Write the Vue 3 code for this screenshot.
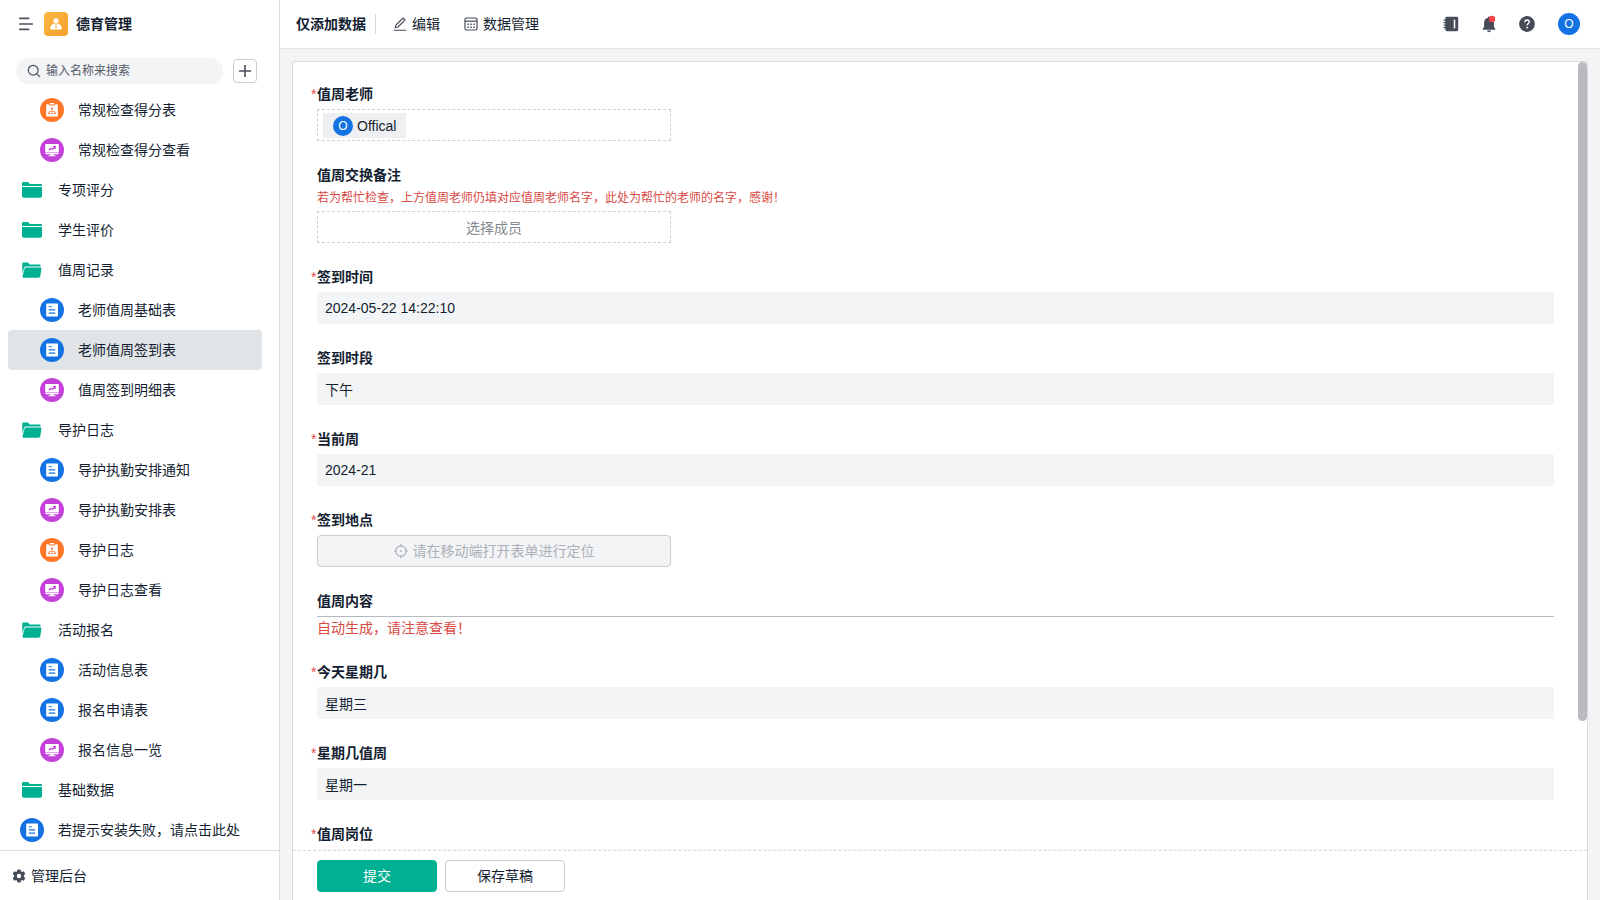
<template>
  <div class="layout">
    <aside class="sidebar">
      <div class="sidebar-header">
        <button class="icon-button" aria-label="菜单">
          <svg width="14" height="14" viewBox="0 0 14 14" fill="none" stroke="currentColor" stroke-width="1.6" stroke-linecap="round">
            <path d="M.8 1.4h8.8M.8 7h12.600M.8 12.400h8.800" />
          </svg>
        </button>
        <span class="app-logo">
          <svg width="24" height="24" viewBox="0 0 24 24" fill="#fff">
            <circle cx="12" cy="8.8" r="2.6" />
            <path fill-rule="evenodd" d="M9.9 11.6 12 13l2.1-1.4c2.2.7 3.7 2.6 3.7 5.2 0 .5-.3.8-.8.8H7c-.5 0-.8-.3-.8-.8 0-2.6 1.5-4.5 3.7-5.2zM11.600 14l-.4 1.800.8.8.8-.8-.4-1.800z" />
          </svg>
        </span>
        <strong class="app-name">德育管理</strong>
      </div>

      <div class="search-row">
        <label class="search-box">
          <svg width="14" height="14" viewBox="0 0 14 14" fill="none" stroke="#4a4f5a" stroke-width="1.2" stroke-linecap="round">
            <circle cx="6.200" cy="6.200" r="4.900" />
            <path d="m9.800 9.800 2.900 2.900" />
          </svg>
          <input type="text" placeholder="输入名称来搜索" aria-label="输入名称来搜索" />
        </label>
        <button class="add-button" aria-label="新建">
          <svg width="14" height="14" viewBox="0 0 14 14" fill="none" stroke="currentColor" stroke-width="1.6">
            <path d="M1 7h12M7 1v12" />
          </svg>
        </button>
      </div>

      <nav class="menu">
        <a
          v-for="item in menuItems"
          :key="item.id"
          href="#"
          class="menu-item"
          :class="{ child: item.child, active: item.id === current }"
          @click.prevent="select(item)"
        >
          <span class="menu-icon" :class="item.type">
            <svg v-if="item.type === 'folder'" width="24" height="24" viewBox="0 0 24 24" fill="#00b092">
              <path d="M2 8V5.500C2 4.600 2.600 4 3.500 4h4.300l2.300 2h10.400c.9 0 1.500.5 1.500 1.400V8z" />
              <path d="M2 8.900h20v9.200c0 1-.7 1.700-1.700 1.700H3.700c-1 0-1.700-.7-1.700-1.700z" />
            </svg>
            <svg v-else-if="item.type === 'folder-open'" width="24" height="24" viewBox="0 0 24 24" fill="#00b092">
              <path d="M2.300 15.500V6c0-.9.5-1.400 1.400-1.400h4.100l2 1.800h9.300c1 0 1.500.5 1.500 1.400v.7H6.200c-1.200 0-1.800.5-2.100 1.500z" />
              <path d="M6.400 9.400H20c1.100 0 1.600.6 1.400 1.600l-1.100 7.100c-.2 1-.8 1.600-1.800 1.600H3.800c-.9 0-1.400-.6-1.200-1.500L4.400 11c.3-1.100.9-1.600 2-1.600z" />
            </svg>
            <svg v-else-if="item.type === 'form'" width="24" height="24" viewBox="0 0 24 24">
              <rect x="6.200" y="5.400" width="11.800" height="13.200" rx="1" fill="#fff" />
              <path d="M8.800 8.700h3M8.800 11.900h6.400M8.800 15.100h6.400" fill="none" stroke="#1473e3" stroke-width="1.100" />
            </svg>
            <svg v-else-if="item.type === 'flow'" width="24" height="24" viewBox="0 0 24 24">
              <path d="M7.200 6.200h1.600v1.200h6.400V6.200h1.600c.6 0 1 .4 1 1v10.400c0 .6-.4 1-1 1H7.200c-.6 0-1-.4-1-1V7.200c0-.6.4-1 1-1z" fill="#fff" />
              <rect x="9.700" y="5" width="4.600" height="1.500" rx=".5" fill="#fff" />
              <path d="M12 11v3M9 15v-1.400h6V15" fill="none" stroke="#ff7629" stroke-width=".7" />
              <path d="M12 9.100l1.400 2.200h-2.800zM8.100 14.700h1.800v1.400H8.100zM11.100 14.700h1.800v1.400h-1.800zM14.100 14.700h1.800v1.400h-1.800z" fill="#ff7629" />
            </svg>
            <svg v-else width="24" height="24" viewBox="0 0 24 24">
              <path d="M6.300 6h11.400c.7 0 1.100.4 1.100 1.100v7.400H5.200V7.100c0-.7.4-1.100 1.100-1.100zM5.200 15h13.600c0 .9-.4 1.300-1.100 1.300H6.300c-.7 0-1.100-.4-1.100-1.300zM10.400 16.300h3.200v1h1.900v1h-7v-1h1.900z" fill="#fff" />
              <path d="m8.900 12.200 2-1.900 1.500 1.200 2.200-2.200M12.900 8.700h2.300V11" fill="none" stroke="#c441d9" stroke-width="1.200" />
            </svg>
          </span>
          <span>{{ item.name }}</span>
        </a>
      </nav>

      <a href="#" class="admin-link">
        <svg width="14" height="14" viewBox="0 0 14 14" fill="#454b57">
          <path fill-rule="evenodd" d="M5.500.4h3l.4 1.900 1 .6 1.900-.6 1.500 2.500-1.400 1.400v1.600l1.400 1.400-1.500 2.500-1.900-.6-1 .6-.4 1.900h-3l-.4-1.900-1-.6-1.900.6L.7 9.200l1.400-1.400V6.200L.7 4.800l1.500-2.500 1.900.6 1-.6zM7 4.800a2.200 2.200 0 1 0 0 4.400 2.200 2.200 0 0 0 0-4.400z" />
        </svg>
        <span>管理后台</span>
      </a>
    </aside>

    <main class="main">
      <header class="topbar">
        <h1>仅添加数据</h1>
        <span class="divider"></span>
        <button class="tool-button edit">
          <svg width="14" height="14" viewBox="0 0 14 14" fill="none" stroke="#454b57" stroke-width="1.1" stroke-linejoin="round">
            <path d="M2.200 10.700 3 8 10 1l2 2-7 7zM.8 13.200h12.400" />
          </svg>
          编辑
        </button>
        <button class="tool-button">
          <svg width="14" height="14" viewBox="0 0 14 14" fill="none" stroke="#454b57" stroke-width="1.2">
            <rect x="1" y="1" width="12" height="12" rx="1.500" />
            <path d="M1 4.200h12" />
            <path d="M3.400 7.200h7.600M3.400 10.200h7.600" stroke-width="1.500" stroke-dasharray="1.500 1.400" />
          </svg>
          数据管理
        </button>

        <div class="topbar-right">
          <button class="icon-button" aria-label="通讯录">
            <svg width="16" height="16" viewBox="0 0 16 16">
              <path d="M4 .7h9.500c1 0 1.700.7 1.700 1.700v11.200c0 1-.7 1.700-1.700 1.700H4c-1 0-1.700-.7-1.700-1.700V2.400C2.300 1.400 3 .7 4 .7z" fill="#454b57" />
              <path d="M.6 4.200h2.600M.6 6.700h2.600M.6 9.200h2.600M.6 11.700h2.600" stroke="#454b57" stroke-width="1.200" />
              <path d="M11.500 3.600v8.800" stroke="#fff" stroke-width="1.500" />
            </svg>
          </button>
          <button class="icon-button" aria-label="消息">
            <svg width="16" height="18" viewBox="0 0 16 18" fill="#454b57">
              <path d="M7 1.800h2v1c2.400.5 3.900 2.300 3.900 4.900v4.100l1.300 2v.9H1.800v-.9l1.300-2V7.700c0-2.600 1.500-4.400 3.900-4.900zM6 15.500h4c-.2 1.100-1 1.700-2 1.700s-1.800-.6-2-1.700z" />
              <circle cx="11" cy="4" r="3.200" fill="#f24545" />
            </svg>
          </button>
          <button class="icon-button" aria-label="帮助">
            <svg width="16" height="16" viewBox="0 0 16 16">
              <circle cx="8" cy="8" r="7.900" fill="#454b57" />
              <path d="M5.800 6.200C5.800 4.800 6.700 4 8 4s2.200.8 2.200 2c0 1.500-2.100 1.700-2.100 3.500" fill="none" stroke="#fff" stroke-width="1.400" />
              <circle cx="8.100" cy="11.600" r=".95" fill="#fff" />
            </svg>
          </button>
          <button class="avatar user">O</button>
        </div>
      </header>

      <div class="content">
        <form class="card" @submit.prevent>
          <div class="form-body">
            <div v-for="field in fields" :key="field.id" class="field">
              <h2 v-if="field.type === 'section'" class="field-label">{{ field.label }}</h2>
              <label v-else class="field-label" :for="field.id">
                <span v-if="field.required" class="star">*</span>{{ field.label }}
              </label>
              <p v-if="field.hint" class="hint">{{ field.hint }}</p>

              <button v-if="field.type === 'member'" :id="field.id" type="button" class="member-box" :class="{ empty: !field.value }">
                <span v-if="field.value" class="chip">
                  <span class="avatar">O</span>{{ field.value }}
                </span>
                <template v-else>选择成员</template>
              </button>
              <button v-else-if="field.type === 'location'" :id="field.id" type="button" class="location-button" disabled>
                <svg width="14" height="14" viewBox="0 0 14 14" fill="none" stroke="currentColor" stroke-width="1.2">
                  <circle cx="7" cy="7" r="5.200" />
                  <path d="M7 0v3M7 11v3M0 7h3M11 7h3" />
                  <circle cx="7" cy="7" r=".9" fill="currentColor" stroke="none" />
                </svg>
                请在移动端打开表单进行定位
              </button>
              <p v-else-if="field.type === 'section'" class="section-text">{{ field.value }}</p>
              <input v-else :id="field.id" class="text-input" type="text" :value="field.value" readonly />
            </div>
          </div>
          <div class="scroll-thumb"></div>
          <footer class="form-footer">
            <button type="submit" class="btn primary">提交</button>
            <button type="button" class="btn">保存草稿</button>
          </footer>
        </form>
      </div>
    </main>
  </div>
</template>

<script setup>
import { ref } from 'vue';

const current = ref(7);

const menuItems = [
  { id: 1, name: '常规检查得分表', type: 'flow', child: true },
  { id: 2, name: '常规检查得分查看', type: 'board', child: true },
  { id: 3, name: '专项评分', type: 'folder' },
  { id: 4, name: '学生评价', type: 'folder' },
  { id: 5, name: '值周记录', type: 'folder-open' },
  { id: 6, name: '老师值周基础表', type: 'form', child: true },
  { id: 7, name: '老师值周签到表', type: 'form', child: true },
  { id: 8, name: '值周签到明细表', type: 'board', child: true },
  { id: 9, name: '导护日志', type: 'folder-open' },
  { id: 10, name: '导护执勤安排通知', type: 'form', child: true },
  { id: 11, name: '导护执勤安排表', type: 'board', child: true },
  { id: 12, name: '导护日志', type: 'flow', child: true },
  { id: 13, name: '导护日志查看', type: 'board', child: true },
  { id: 14, name: '活动报名', type: 'folder-open' },
  { id: 15, name: '活动信息表', type: 'form', child: true },
  { id: 16, name: '报名申请表', type: 'form', child: true },
  { id: 17, name: '报名信息一览', type: 'board', child: true },
  { id: 18, name: '基础数据', type: 'folder' },
  { id: 19, name: '若提示安装失败，请点击此处', type: 'form' }
];

const fields = [
  { id: 'teacher', label: '值周老师', type: 'member', value: 'Offical', required: true },
  {
    id: 'swap',
    label: '值周交换备注',
    type: 'member',
    hint: '若为帮忙检查，上方值周老师仍填对应值周老师名字，此处为帮忙的老师的名字，感谢！'
  },
  { id: 'time', label: '签到时间', type: 'text', value: '2024-05-22 14:22:10', required: true },
  { id: 'period', label: '签到时段', type: 'text', value: '下午' },
  { id: 'week', label: '当前周', type: 'text', value: '2024-21', required: true },
  { id: 'place', label: '签到地点', type: 'location', required: true },
  { id: 'section', label: '值周内容', type: 'section', value: '自动生成，请注意查看！' },
  { id: 'today', label: '今天星期几', type: 'text', value: '星期三', required: true },
  { id: 'duty-day', label: '星期几值周', type: 'text', value: '星期一', required: true },
  { id: 'post', label: '值周岗位', type: 'text', value: '', required: true }
];

const select = (item) => {
  if (!item.type.startsWith('folder')) {
    current.value = item.id;
  }
};
</script>

<style>
body {
  margin: 0;
}
</style>

<style scoped>
* {
  box-sizing: border-box;
}

.layout {
  display: flex;
  height: 100vh;
  overflow: hidden;
  background: #f2f4f6;
  color: #141e31;
  font-family: "Liberation Sans", "Noto Sans CJK SC", sans-serif;
  font-size: 14px;
  line-height: 22px;
}

button,
input {
  font: inherit;
  color: inherit;
}

button {
  cursor: pointer;
}

a {
  color: inherit;
  text-decoration: none;
}

svg {
  display: block;
  flex: none;
}

h1,
h2,
p {
  margin: 0;
  font-size: 14px;
}

.icon-button {
  display: flex;
  padding: 0;
  border: none;
  background: none;
  color: #4a4f5a;
}

.sidebar {
  display: flex;
  flex-direction: column;
  flex: none;
  width: 280px;
  background: #fff;
  border-right: 1px solid #dcdfe2;
}

.sidebar-header {
  display: flex;
  align-items: center;
  flex: none;
  height: 48px;
  padding-left: 19px;
}

.app-logo {
  margin: 0 8px 0 11px;
  border-radius: 4px;
  background: linear-gradient(135deg, #fbb845, #f3a029);
}

.app-name {
  font-weight: 700;
}

.search-row {
  display: flex;
  align-items: center;
  flex: none;
  gap: 10px;
  height: 42px;
  padding: 4px 22px 0 16px;
}

.search-box {
  display: flex;
  align-items: center;
  flex: 1;
  gap: 5px;
  min-width: 0;
  height: 26px;
  padding: 0 12px 0 11px;
  border-radius: 13px;
  background: #f2f4f6;
}

.search-box input {
  flex: 1;
  min-width: 0;
  padding: 0;
  border: none;
  outline: none;
  background: none;
  font-size: 12px;
}

.search-box input::placeholder {
  color: #555b66;
}

.add-button {
  display: flex;
  align-items: center;
  justify-content: center;
  width: 24px;
  height: 24px;
  padding: 0;
  border: 1px solid #c9ccd1;
  border-radius: 4px;
  background: #fff;
  color: #4a4f5a;
}

.menu {
  flex: 1;
  min-height: 0;
  overflow-y: auto;
  padding: 0 17px 0 8px;
  scrollbar-width: none;
}

.menu-item {
  display: flex;
  align-items: center;
  gap: 14px;
  height: 40px;
  padding-left: 12px;
  border-radius: 4px;
  white-space: nowrap;
}

.menu-item.child {
  padding-left: 32px;
}

.menu-item.active {
  background: #e1e4e7;
}

.menu-icon {
  border-radius: 50%;
}

.menu-icon.form {
  background: #1473e3;
}

.menu-icon.flow {
  background: #ff7629;
}

.menu-icon.board {
  background: #c441d9;
}

.admin-link {
  display: flex;
  align-items: center;
  flex: none;
  gap: 5px;
  height: 50px;
  padding-left: 12px;
  border-top: 1px solid #dcdfe2;
}

.main {
  display: flex;
  flex-direction: column;
  flex: 1;
  min-width: 0;
}

.topbar {
  display: flex;
  align-items: center;
  flex: none;
  height: 49px;
  padding: 0 20px 0 16px;
  border-bottom: 1px solid #e1e4e7;
  background: #fff;
}

.divider {
  width: 1px;
  height: 20px;
  margin: 0 17px 0 9px;
  background: #d3d6da;
}

.tool-button {
  display: flex;
  align-items: center;
  gap: 5px;
  padding: 0;
  border: none;
  background: none;
}

.tool-button.edit {
  margin-right: 24px;
}

.topbar-right {
  display: flex;
  align-items: center;
  gap: 22px;
  margin-left: auto;
}

.avatar {
  display: flex;
  align-items: center;
  justify-content: center;
  width: 20px;
  height: 20px;
  border-radius: 50%;
  background: #1473e3;
  color: #fff;
  font-size: 12px;
}

.avatar.user {
  width: 22px;
  height: 22px;
  margin-left: 1px;
  padding: 0;
  border: none;
}

.content {
  flex: 1;
  min-height: 0;
  padding: 12px 12px 0;
}

.card {
  position: relative;
  display: flex;
  flex-direction: column;
  height: 100%;
  border: 1px solid #d8dbde;
  border-bottom: none;
  border-radius: 4px 4px 0 0;
  background: #fff;
}

.form-body {
  display: flex;
  flex-direction: column;
  flex: 1;
  gap: 23px;
  min-height: 0;
  overflow-y: auto;
  padding: 21px 33px 21px 24px;
  scrollbar-width: none;
}

.scroll-thumb {
  position: absolute;
  top: 0;
  right: 0;
  width: 9px;
  height: 78.6%;
  border-radius: 5px;
  background: #b8babd;
}

.field-label {
  display: block;
  margin-bottom: 4px;
  font-weight: 700;
}

.star {
  display: inline-block;
  width: 6px;
  margin-left: -6px;
  color: #eb4a4a;
  font-weight: 400;
}

.hint {
  margin-bottom: 4px;
  color: #d94a45;
  font-size: 12px;
  line-height: 17px;
}

.member-box,
.location-button {
  display: flex;
  align-items: center;
  width: 354px;
  max-width: 100%;
  height: 32px;
  padding: 0 5px;
}

.member-box {
  padding-top: 1px;
  border: 1px dashed #cfd2d5;
  background: #fff;
}

.member-box.empty {
  justify-content: center;
  color: #84888f;
}

.chip {
  display: flex;
  align-items: center;
  gap: 4px;
  height: 25px;
  padding: 0 10px;
  background: #eeeff0;
}

.location-button {
  justify-content: center;
  gap: 5px;
  border: 1px solid #c9ccd1;
  border-radius: 4px;
  background: #f2f4f6;
  color: #adb1b6;
  cursor: not-allowed;
}

.text-input {
  display: block;
  width: 100%;
  height: 32px;
  padding: 0 8px;
  border: none;
  border-radius: 2px;
  outline: none;
  background: #f2f4f6;
}

.section-text {
  padding-top: 2px;
  border-top: 1px solid #b5b9bd;
  color: #d94a45;
  line-height: 19px;
}

.form-footer {
  display: flex;
  flex: none;
  gap: 8px;
  padding: 9px 24px 8px;
  border-top: 1px dashed #d8dbde;
}

.btn {
  width: 120px;
  height: 32px;
  padding: 0;
  border: 1px solid #c9ccd1;
  border-radius: 4px;
  background: #fff;
}

.btn.primary {
  border-color: #00b092;
  background: #00b092;
  color: #fff;
}
</style>
